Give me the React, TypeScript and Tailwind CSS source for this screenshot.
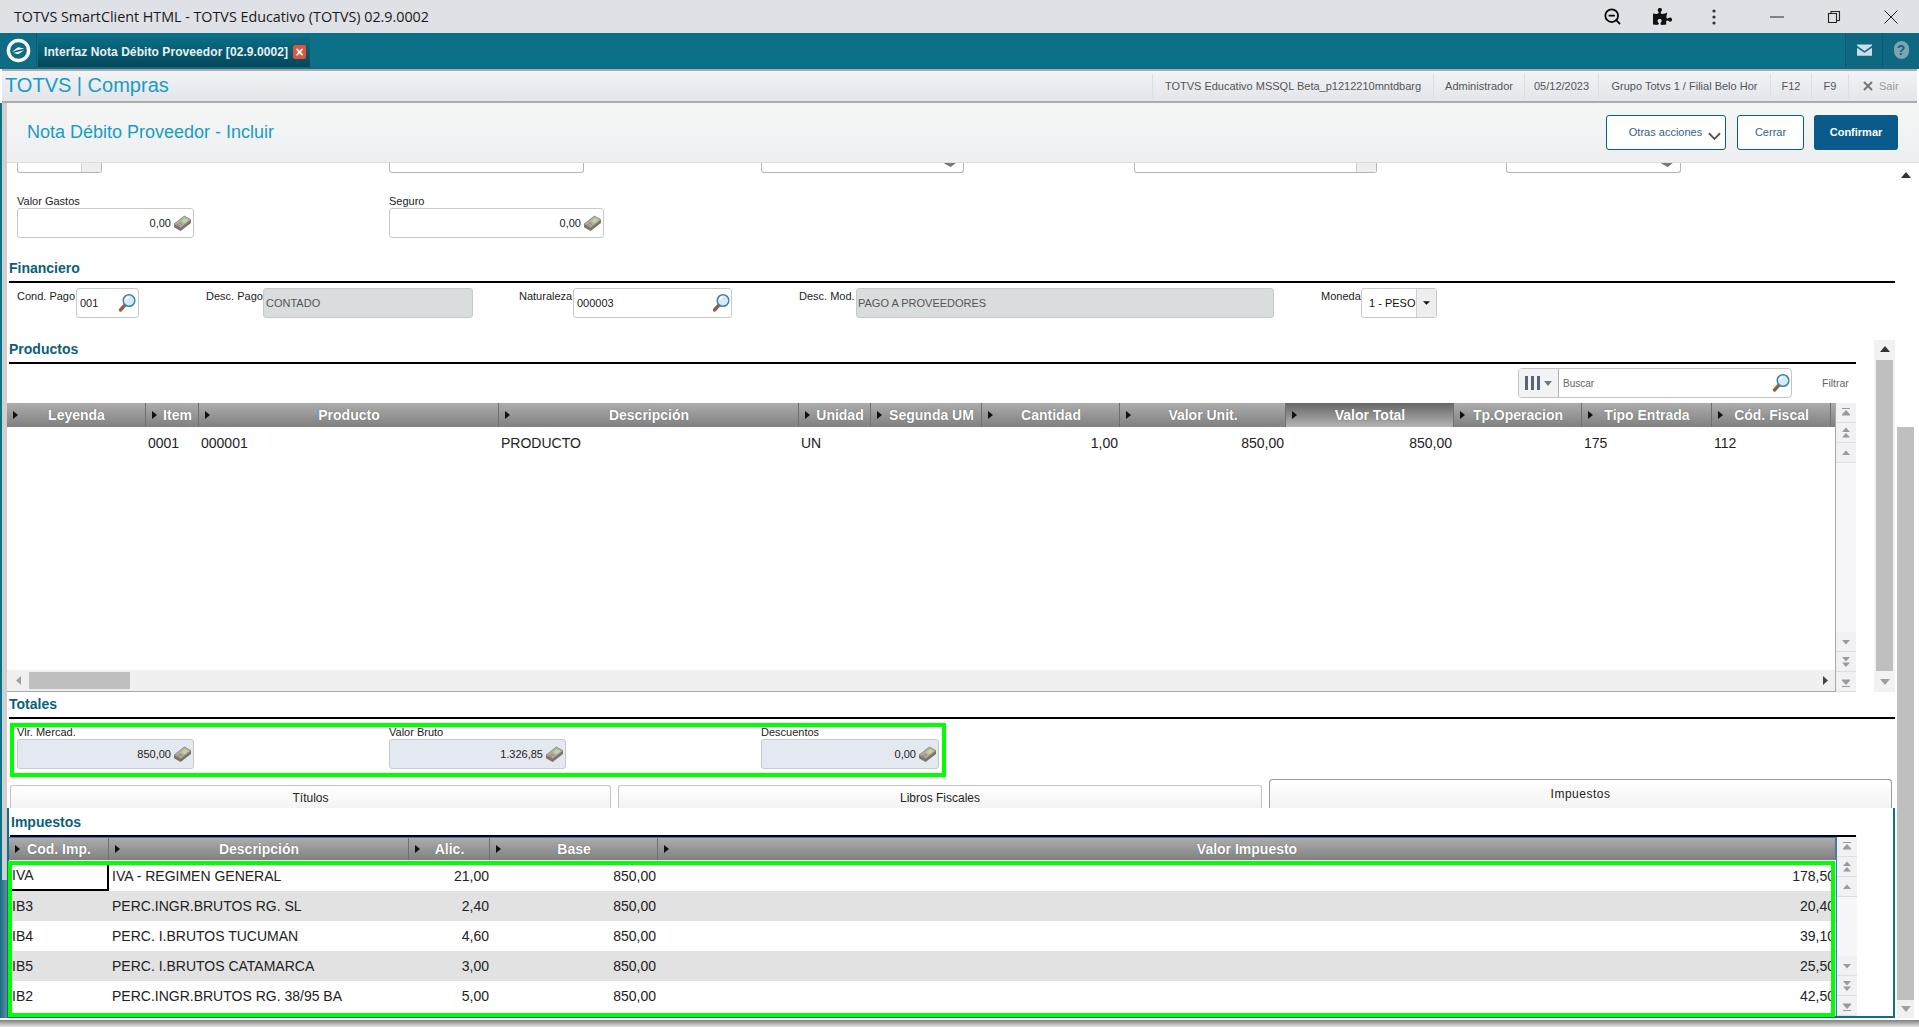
import React from 'react';
import { ZoomOut } from 'lucide-react';
import { FaPuzzlePiece } from 'react-icons/fa';

const MoneyIcon = ({ className = '' }: { className?: string }) => (
  <svg viewBox="0 0 20 18" className={`w-[19px] h-[17px] shrink-0 ${className}`}>
    <path d="M1 9.5 12 1l7 4v3.5L8 17 1 13z" fill="#7d7368" />
    <path d="M1 9.5 12 1l7 4L8 13.5z" fill="#b3aea4" stroke="#8b8479" strokeWidth="0.6" />
    <path d="M8.5 6.5 12.5 3.2l4 2.2-4 3.3z" fill="#b9d99a" />
    <path d="M4 9.8 7.5 11.8M6 8.2 9.5 10.2" stroke="#7b7468" strokeWidth="0.8" />
  </svg>
);

const LensIcon = () => (
  <svg viewBox="0 0 18 20" className="w-[18px] h-[20px] shrink-0">
    <path d="M7.5 11.5 2.5 17" stroke="#8a6248" strokeWidth="3.4" strokeLinecap="round" />
    <circle cx="11" cy="7.5" r="5.8" fill="#d6ebf6" stroke="#3f84ad" strokeWidth="1.5" />
    <path d="M8 7a3.4 3.4 0 0 1 3-3" stroke="#fff" strokeWidth="1.4" fill="none" />
  </svg>
);

const HeadArrow = () => (
  <svg viewBox="0 0 5 8" className="w-[5px] h-[8px] shrink-0">
    <path d="M0 0 5 4 0 8z" fill="#111" />
  </svg>
);

const ScrollBtn = ({ kind }: { kind: string }) => (
  <div className="h-[20px] w-[20px] flex items-center justify-center bg-[#f1f1f3] border-b border-[#dedede]">
    <svg viewBox="0 0 10 12" className="w-[10px] h-[12px]">
      {kind === 'topEnd' && <path d="M1 1.5h8M5 3.5 9 8H1z" stroke="#9a9a9a" fill="#9a9a9a" strokeWidth="1" />}
      {kind === 'upDouble' && <path d="M5 0.5 9 5H1zM5 6 9 10.5H1z" fill="#9a9a9a" />}
      {kind === 'up' && <path d="M5 3.5 9 8H1z" fill="#9a9a9a" />}
      {kind === 'down' && <path d="M5 8.5 9 4H1z" fill="#9a9a9a" />}
      {kind === 'downDouble' && <path d="M5 5.5 9 1H1zM5 11 9 6.5H1z" fill="#9a9a9a" />}
      {kind === 'bottomEnd' && <path d="M1 10.5h8M5 8.5 9 4H1z" stroke="#9a9a9a" fill="#9a9a9a" strokeWidth="1" />}
    </svg>
  </div>
);

const GridScroll = () => (
  <div className="w-[20px] shrink-0 flex flex-col justify-between bg-[#f7f7fa]">
    <div className="flex flex-col">
      <ScrollBtn kind="topEnd" />
      <ScrollBtn kind="upDouble" />
      <ScrollBtn kind="up" />
    </div>
    <div className="flex flex-col">
      <ScrollBtn kind="down" />
      <ScrollBtn kind="downDouble" />
      <ScrollBtn kind="bottomEnd" />
    </div>
  </div>
);

const SectionTitle = ({ text, className = '' }: { text: string; className?: string }) => (
  <div className={`h-[18px] leading-[18px] pl-[2px] text-[14px] font-bold text-[#0b6078] ${className}`}>{text}</div>
);

const boxCls = 'h-[30px] border border-[#c9c9c9] rounded-[3px] flex items-center';

const MoneyField = ({ label, value, className, readOnly }: { label: string; value: string; className: string; readOnly?: boolean }) => (
  <div className={`flex flex-col shrink-0 ${className}`}>
    <div className="h-[14px] leading-[14px] text-[11px] text-[#222] whitespace-nowrap">{label}</div>
    <div className={`${boxCls} justify-end pr-[1px] gap-[2px] text-[11px] text-[#222] ${readOnly ? 'bg-[#e4e8f0]' : 'bg-white'}`}>
      <span>{value}</span>
      <MoneyIcon />
    </div>
  </div>
);

const InlineLabel = ({ text, className }: { text: string; className: string }) => (
  <div className={`shrink-0 text-[11px] leading-[14px] pt-[1px] text-[#222] whitespace-nowrap ${className}`}>{text}</div>
);

const HeaderCell = ({ label, w, active, tight }: { label: string; w: string; active?: boolean; tight?: boolean }) => (
  <div
    className={`${w} shrink-0 h-full flex items-center pl-[6px] border-r border-[#707070] ${tight ? '' : 'pr-[10px]'} ${
      active ? 'bg-gradient-to-b from-[#666666] to-[#b5b5b5]' : ''
    }`}
  >
    <HeadArrow />
    <span className="flex-1 text-center text-[14px] font-bold text-white whitespace-nowrap [text-shadow:0_0_1px_#555]">{label}</span>
  </div>
);

const productCols = [
  { label: 'Leyenda', w: 'w-[139px]', value: '', right: false, tight: false },
  { label: 'Item', w: 'w-[53px]', value: '0001', right: false, tight: true },
  { label: 'Producto', w: 'w-[300px]', value: '000001', right: false, tight: false },
  { label: 'Descripción', w: 'w-[300px]', value: 'PRODUCTO', right: false, tight: false },
  { label: 'Unidad', w: 'w-[72px]', value: 'UN', right: false, tight: true },
  { label: 'Segunda UM', w: 'w-[111px]', value: '', right: false, tight: true },
  { label: 'Cantidad', w: 'w-[138px]', value: '1,00', right: true, tight: false },
  { label: 'Valor Unit.', w: 'w-[166px]', value: '850,00', right: true, tight: false },
  { label: 'Valor Total', w: 'w-[168px]', value: '850,00', right: true, tight: false },
  { label: 'Tp.Operacion', w: 'w-[128px]', value: '', right: false, tight: false },
  { label: 'Tipo Entrada', w: 'w-[130px]', value: '175', right: false, tight: false },
  { label: 'Cód. Fiscal', w: 'w-[119px]', value: '112', right: false, tight: false },
];

const taxCols = [
  { label: 'Cod. Imp.', w: 'w-[100px]' },
  { label: 'Descripción', w: 'w-[300px]' },
  { label: 'Alic.', w: 'w-[81px]' },
  { label: 'Base', w: 'w-[168px]' },
  { label: 'Valor Impuesto', w: 'w-[1178px]' },
];

const taxRows = [
  ['IVA', 'IVA - REGIMEN GENERAL', '21,00', '850,00', '178,50'],
  ['IB3', 'PERC.INGR.BRUTOS RG. SL', '2,40', '850,00', '20,40'],
  ['IB4', 'PERC. I.BRUTOS TUCUMAN', '4,60', '850,00', '39,10'],
  ['IB5', 'PERC. I.BRUTOS CATAMARCA', '3,00', '850,00', '25,50'],
  ['IB2', 'PERC.INGR.BRUTOS RG. 38/95 BA', '5,00', '850,00', '42,50'],
];

const infoItems = [
  { text: 'TOTVS Educativo MSSQL Beta_p1212210mntdbarg', w: 'w-[281px]' },
  { text: 'Administrador', w: 'w-[91px]' },
  { text: '05/12/2023', w: 'w-[74px]' },
  { text: 'Grupo Totvs 1 / Filial Belo Hor', w: 'w-[172px]' },
  { text: 'F12', w: 'w-[41px]' },
  { text: 'F9', w: 'w-[37px]' },
];

export default function App() {
  return (
    <div className="w-[1919px] h-[1027px] overflow-hidden bg-white font-['Liberation_Sans',sans-serif] text-[#222]">
      {/* window title bar */}
      <div className="h-[33px] bg-[#dee1e6] flex items-center pl-[14px] text-[#1a1a1a]">
        <span className="font-['Open_Sans',sans-serif] text-[14.3px] flex-1">TOTVS SmartClient HTML - TOTVS Educativo (TOTVS) 02.9.0002</span>
        <ZoomOut className="w-[19px] h-[19px] text-black mr-[31px]" strokeWidth={2.2} />
        <FaPuzzlePiece className="w-[19px] h-[19px] text-[#111] mr-[40px]" />
        <svg viewBox="0 0 4 16" className="w-[4px] h-[16px] mr-[54px]">
          <circle cx="2" cy="2" r="1.6" fill="#333" />
          <circle cx="2" cy="8" r="1.6" fill="#333" />
          <circle cx="2" cy="14" r="1.6" fill="#333" />
        </svg>
        <svg viewBox="0 0 14 14" className="w-[14px] h-[14px] mr-[43px]">
          <path d="M0 7h14" stroke="#222" strokeWidth="1" />
        </svg>
        <svg viewBox="0 0 14 14" className="w-[14px] h-[14px] mr-[43px]">
          <path d="M1.5 3.5h8v9h-8zM4 3.5V1.5h8.5v9h-3" stroke="#222" strokeWidth="1.1" fill="none" />
        </svg>
        <svg viewBox="0 0 14 14" className="w-[14px] h-[14px] mr-[21px]">
          <path d="M0.5 0.5l13 13M13.5 0.5l-13 13" stroke="#222" strokeWidth="1" />
        </svg>
      </div>

      {/* teal app bar */}
      <div className="h-[36px] bg-[#0c7089] flex items-start border-b-[2px] border-[#0a6b83]">
        <div className="w-[37px] h-[34px] flex items-center justify-center bg-[#0e6c84] border-r border-[#0a5a70]">
          <svg viewBox="0 0 26 26" className="w-[25px] h-[25px]">
            <circle cx="13" cy="13" r="10.5" fill="none" stroke="#fff" strokeWidth="3.6" />
            <path d="M6 14.5 12.5 9.5 19 11 12 12.5z" fill="#fff" />
            <path d="M7.5 15.5 14 14l5-1.5-6 4.5z" fill="#fff" />
          </svg>
        </div>
        <div className="ml-[1px] mt-[3px] w-[272px] h-[31px] flex items-center pl-[6px] bg-gradient-to-b from-[#0c6f87] to-[#04475a]">
          <span className="text-[12px] tracking-[0.08px] font-bold text-[#e6f2f5] whitespace-nowrap">Interfaz Nota Débito Proveedor [02.9.0002]</span>
          <span className="ml-[5px] w-[13px] h-[14px] rounded-[2px] bg-[#e0553a] text-white text-[14px] font-bold leading-[14px] text-center">×</span>
        </div>
        <div className="flex-1" />
        <div className="w-[38px] h-[34px] flex items-center justify-center bg-[#0d6880] border-x border-[#0a5a70]">
          <svg viewBox="0 0 16 12" className="w-[15px] h-[12px]">
            <path d="M0 0h16v1.5L8 7 0 1.5zM0 3.5 8 9l8-5.5V12H0z" fill="#c9dee6" />
          </svg>
        </div>
        <div className="w-[36px] h-[34px] flex items-center justify-center bg-[#0d6880]">
          <span className="w-[15px] h-[18px] rounded-full bg-[#7ea4b2] text-[#0d6880] text-[14px] font-bold leading-[18px] text-center">?</span>
        </div>
      </div>

      {/* module bar */}
      <div className="h-[34px] ml-[2px] mr-[2px] flex items-center bg-gradient-to-b from-[#f1f3f6] to-[#e3e5e9] border-y-[2px] border-[#a9abad]">
        <span className="pl-[3px] pb-[2px] text-[20px] text-[#1a9bc4] flex-1">TOTVS | Compras</span>
        {infoItems.map((item) => (
          <div key={item.text} className={`${item.w} h-[24px] flex items-center justify-center border-l border-[#dcdde0] text-[11px] text-[#555] whitespace-nowrap`}>
            {item.text}
          </div>
        ))}
        <div className="w-[69px] h-[24px] flex items-center pl-[14px] gap-[6px] border-l border-[#dcdde0] text-[11px] text-[#999]">
          <svg viewBox="0 0 10 10" className="w-[10px] h-[10px]">
            <path d="M1 1l8 8M9 1 1 9" stroke="#777" strokeWidth="2" />
          </svg>
          Sair
        </div>
      </div>

      <div className="flex h-[915px]">
        {/* left frame edge */}
        <div className="w-[7px] shrink-0 flex flex-col">
          <div className="h-[777px] border-l-[2px] border-[#0c7089] bg-[#cfcfcf]" />
          <div className="h-[138px] bg-gradient-to-r from-[#0c7089] to-[#5e8a9b]" />
        </div>

        <div className="flex-1 flex flex-col min-w-0">
          {/* page title */}
          <div className="h-[60px] flex items-center bg-gradient-to-b from-[#f5f7f7] to-[#eeeff0] border-b border-[#dddddd]">
            <span className="pl-[20px] text-[18px] text-[#1a9bc4] flex-1">Nota Débito Proveedor - Incluir</span>
            <div className="w-[120px] h-[35px] flex items-center justify-center gap-[6px] pl-[18px] mr-[11px] bg-white border border-[#0a5b8c] rounded-[3px] text-[11px] text-[#33608a] whitespace-nowrap">
              Otras acciones
              <svg viewBox="0 0 14 9" className="w-[13px] h-[9px] mt-[7px] shrink-0">
                <path d="M1 1l6 6 6-6" stroke="#555" strokeWidth="2" fill="none" />
              </svg>
            </div>
            <div className="w-[67px] h-[35px] flex items-center justify-center mr-[10px] bg-white border border-[#0a5b8c] rounded-[3px] text-[11px] text-[#33608a]">Cerrar</div>
            <div className="w-[84px] h-[35px] flex items-center justify-center mr-[21px] bg-[#0a5b8c] rounded-[3px] text-[11px] font-bold text-white">Confirmar</div>
          </div>

          <div className="flex flex-1 min-h-0">
            <div className="w-[1888px] shrink-0 flex flex-col">
              {/* header form fields */}
              <div className="h-[177px] flex flex-col shrink-0">
                <div className="h-[10px] flex shrink-0">
                  <div className="ml-[10px] w-[85px] border border-t-0 border-[#b5b5b5] rounded-b-[3px] flex justify-end">
                    <div className="w-[20px] bg-[#eeeeee] border-l border-[#d0d0d0]" />
                  </div>
                  <div className="ml-[287px] w-[195px] border border-t-0 border-[#b5b5b5] rounded-b-[3px]" />
                  <div className="ml-[177px] w-[203px] border border-t-0 border-[#b5b5b5] rounded-b-[3px] flex justify-end overflow-hidden">
                    <MoneyIcon className="-mt-[12px] mr-[1px]" />
                  </div>
                  <div className="ml-[170px] w-[243px] border border-t-0 border-[#b5b5b5] rounded-b-[3px] flex justify-end">
                    <div className="w-[20px] bg-[#eeeeee] border-l border-[#d0d0d0]" />
                  </div>
                  <div className="ml-[129px] w-[175px] border border-t-0 border-[#b5b5b5] rounded-b-[3px] flex justify-end overflow-hidden">
                    <MoneyIcon className="-mt-[12px] mr-[1px]" />
                  </div>
                </div>
                <div className="flex mt-[21px]">
                  <MoneyField label="Valor Gastos" value="0,00" className="ml-[10px] w-[177px]" />
                  <MoneyField label="Seguro" value="0,00" className="ml-[195px] w-[215px]" />
                </div>
                <SectionTitle text="Financiero" className="mt-[21px]" />
                <div className="h-[2px] mt-[4px] ml-[2px] bg-black" />
                <div className="flex mt-[5px] h-[30px]">
                  <InlineLabel text="Cond. Pago" className="ml-[10px] w-[59px]" />
                  <div className={`${boxCls} w-[63px] pl-[3px] pr-[2px] justify-between text-[11px]`}>
                    <span>001</span>
                    <LensIcon />
                  </div>
                  <InlineLabel text="Desc. Pago" className="ml-[67px] w-[57px]" />
                  <div className={`${boxCls} w-[210px] pl-[2px] bg-[#d9dddd] border-[#b4b8b8] text-[11px] text-[#555]`}>CONTADO</div>
                  <InlineLabel text="Naturaleza" className="ml-[46px] w-[54px]" />
                  <div className={`${boxCls} w-[159px] pl-[3px] pr-[1px] justify-between text-[11px]`}>
                    <span>000003</span>
                    <LensIcon />
                  </div>
                  <InlineLabel text="Desc. Mod." className="ml-[67px] w-[57px]" />
                  <div className={`${boxCls} w-[418px] pl-[1px] bg-[#d9dddd] border-[#b4b8b8] text-[11px] text-[#555]`}>PAGO A PROVEEDORES</div>
                  <InlineLabel text="Moneda" className="ml-[47px] w-[40px]" />
                  <div className={`${boxCls} w-[76px] pl-[7px] justify-between text-[11px] text-[#111] border-[#b5b5b5]`}>
                    <span>1 - PESO</span>
                    <div className="w-[20px] h-full bg-[#eeeeee] border-l border-[#d0d0d0] flex items-center justify-center">
                      <svg viewBox="0 0 8 4" className="w-[7px] h-[4px]">
                        <path d="M0 0h8L4 4z" fill="#111" />
                      </svg>
                    </div>
                  </div>
                </div>
              </div>

              {/* products */}
              <div className="h-[352px] flex shrink-0">
                <div className="w-[1849px] shrink-0 flex flex-col">
                  <SectionTitle text="Productos" />
                  <div className="h-[2px] mt-[4px] ml-[2px] bg-black" />
                  <div className="h-[39px] flex justify-end items-start pt-[4px] pr-[5px]">
                    <div className="w-[274px] h-[30px] flex border border-[#c4c4c4] rounded-[4px] overflow-hidden">
                      <div className="w-[40px] flex items-center justify-center gap-[4px] bg-[#f3f3f6] border-r border-[#b0b0b0]">
                        <div className="flex gap-[3px]">
                          <span className="w-[3px] h-[14px] bg-[#5a6478]" />
                          <span className="w-[3px] h-[14px] bg-[#5a6478]" />
                          <span className="w-[3px] h-[14px] bg-[#5a6478]" />
                        </div>
                        <svg viewBox="0 0 8 5" className="w-[8px] h-[5px]">
                          <path d="M0 0h8L4 5z" fill="#6f7686" />
                        </svg>
                      </div>
                      <div className="flex-1 flex items-center justify-between pl-[4px] pr-[1px] text-[10px] text-[#666]">
                        <span>Buscar</span>
                        <LensIcon />
                      </div>
                    </div>
                    <span className="ml-[30px] w-[29px] h-[30px] leading-[30px] text-[10.5px] text-[#666]">Filtrar</span>
                  </div>
                  <div className="h-[289px] flex">
                    <div className="w-[1829px] shrink-0 flex flex-col border-r border-[#a8a8a8]">
                      <div className="h-[24px] shrink-0 flex bg-gradient-to-b from-[#adadad] to-[#808080] [&_span]:pt-[1px]">
                        {productCols.map((c) => (
                          <HeaderCell key={c.label} label={c.label} w={c.w} tight={c.tight} active={c.label === 'Valor Total'} />
                        ))}
                      </div>
                      <div className="flex-1 bg-white">
                        <div className="h-[33px] flex items-center text-[14px] text-[#222]">
                          {productCols.map((c) => (
                            <div key={c.label} className={`${c.w} shrink-0 px-[2px] whitespace-nowrap ${c.right ? 'text-right' : ''}`}>
                              {c.value}
                            </div>
                          ))}
                        </div>
                      </div>
                      <div className="h-[22px] shrink-0 flex items-center bg-[#f0f0f0] border-b border-[#a8a8a8] pl-[9px] pr-[7px]">
                        <svg viewBox="0 0 5 9" className="w-[5px] h-[9px]">
                          <path d="M5 0 0 4.5 5 9z" fill="#a0a0a0" />
                        </svg>
                        <div className="ml-[8px] w-[101px] h-[17px] bg-[#bfbfbf]" />
                        <div className="flex-1" />
                        <svg viewBox="0 0 5 9" className="w-[5px] h-[9px]">
                          <path d="M0 0 5 4.5 0 9z" fill="#444" />
                        </svg>
                      </div>
                    </div>
                    <GridScroll />
                  </div>
                </div>
                <div className="ml-[18px] w-[21px] shrink-0 flex flex-col items-center bg-[#f2f2f2]">
                  <div className="h-[20px] flex items-center pb-[2px]">
                    <svg viewBox="0 0 10 6" className="w-[10px] h-[6px]">
                      <path d="M5 0 10 6H0z" fill="#333" />
                    </svg>
                  </div>
                  <div className="w-[17px] h-[311px] bg-[#bfbfbf]" />
                  <div className="flex-1 flex items-center">
                    <svg viewBox="0 0 10 6" className="w-[10px] h-[6px]">
                      <path d="M5 6 10 0H0z" fill="#a0a0a0" />
                    </svg>
                  </div>
                </div>
              </div>

              {/* totals */}
              <SectionTitle text="Totales" className="mt-[3px] shrink-0" />
              <div className="h-[2px] mt-[4px] ml-[2px] shrink-0 bg-black" />
              <div className="relative h-[60px] shrink-0 flex pt-[6px]">
                <MoneyField label="Vlr. Mercad." value="850,00" className="ml-[10px] w-[177px]" readOnly />
                <MoneyField label="Valor Bruto" value="1.326,85" className="ml-[195px] w-[177px]" readOnly />
                <MoneyField label="Descuentos" value="0,00" className="ml-[195px] w-[178px]" readOnly />
                <div className="absolute left-[3px] top-[4px] w-[936px] h-[54px] border-[4px] border-[#00ff00]" />
              </div>

              {/* tabs */}
              <div className="h-[29px] shrink-0 flex items-end text-[12px] text-[#222]">
                <div className="ml-[3px] w-[601px] h-[23px] pt-[2px] flex items-center justify-center bg-gradient-to-b from-white to-[#f3f3f3] border border-b-0 border-[#c4c4c4] rounded-t-[3px]">Títulos</div>
                <div className="ml-[7px] w-[644px] h-[23px] pt-[2px] flex items-center justify-center bg-gradient-to-b from-white to-[#f3f3f3] border border-b-0 border-[#c4c4c4] rounded-t-[3px]">Libros Fiscales</div>
                <div className="ml-[7px] w-[623px] h-[29px] flex items-center justify-center tracking-[0.5px] bg-gradient-to-b from-white to-[#f3f3f3] border border-b-0 border-[#999999] rounded-t-[4px]">Impuestos</div>
              </div>

              {/* taxes panel */}
              <div className="h-[210px] shrink-0 flex flex-col border-x-[2px] border-b-[2px] border-[#0c7089]">
                <SectionTitle text="Impuestos" className="mt-[5px] shrink-0" />
                <div className="h-[2px] mt-[4px] ml-[1px] w-[1846px] shrink-0 bg-black" />
                <div className="flex-1 min-h-0 flex w-[1847px]">
                  <div className="w-[1827px] shrink-0 flex flex-col">
                    <div className="h-[23px] shrink-0 flex bg-gradient-to-b from-[#adadad] to-[#808080] border-t border-[#2d7dd2]">
                      {taxCols.map((c) => (
                        <HeaderCell key={c.label} label={c.label} w={c.w} />
                      ))}
                    </div>
                    <div className="relative flex-1 min-h-0">
                      {taxRows.map((row, i) => (
                        <div
                          key={row[0]}
                          className={`flex items-center text-[14px] text-[#222] whitespace-nowrap ${i === 0 ? 'h-[31px] pt-[2px]' : 'h-[30px]'} ${i % 2 === 1 ? 'bg-[#e2e2e2]' : 'bg-white'}`}
                        >
                          <div className={`w-[100px] shrink-0 h-full flex items-center pl-[3px] ${i === 0 ? 'border-r-[2px] border-b-[2px] border-black' : ''}`}>{row[0]}</div>
                          <div className="w-[300px] shrink-0 pl-[3px]">{row[1]}</div>
                          <div className="w-[81px] shrink-0 pr-[1px] text-right">{row[2]}</div>
                          <div className="w-[168px] shrink-0 pr-[2px] text-right">{row[3]}</div>
                          <div className="w-[1178px] shrink-0 pr-[1px] text-right">{row[4]}</div>
                        </div>
                      ))}
                      <div className="absolute -left-[1px] top-[1px] w-[1827px] h-[156px] border-[4px] border-[#00ff00]" />
                    </div>
                  </div>
                  <div className="border-l border-[#2d7dd2] flex">
                    <GridScroll />
                  </div>
                </div>
              </div>
            </div>

            {/* outer scrollbar */}
            <div className="w-[24px] shrink-0 flex flex-col pl-[2px] pr-[5px]">
              <div className="h-[26px] flex items-center justify-center pb-[2px]">
                <svg viewBox="0 0 10 6" className="w-[10px] h-[6px]">
                  <path d="M5 0 10 6H0z" fill="#333" />
                </svg>
              </div>
              <div className="h-[238px]" />
              <div className="h-[573px] bg-[#bfbfbf]" />
              <div className="h-[18px] flex items-center justify-center bg-[#f0f0f0]">
                <svg viewBox="0 0 10 6" className="w-[10px] h-[6px]">
                  <path d="M5 6 10 0H0z" fill="#a0a0a0" />
                </svg>
              </div>
            </div>
          </div>
        </div>
      </div>

      {/* window shadow */}
      <div className="h-[9px] border-t-[2px] border-white bg-gradient-to-b from-[#808080] to-[#e6e6e6]" />
    </div>
  );
}
